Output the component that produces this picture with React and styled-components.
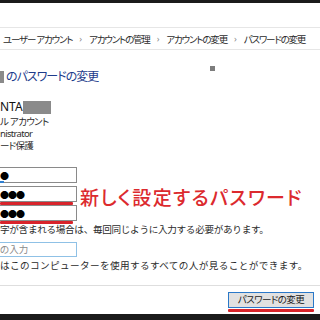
import React from "react";
import styled, { createGlobalStyle } from "styled-components";

const GlobalStyle = createGlobalStyle`
  html, body {
    margin: 0;
    padding: 0;
    background: #fff;
    overflow: hidden;
  }
  * {
    box-sizing: border-box;
  }
`;

const FONT = `"Noto Sans", "Noto Sans CJK JP", sans-serif`;

const crumbs = ["ユーザー アカウント", "アカウントの管理", "アカウントの変更", "パスワードの変更"];

export default function App() {
  return (
    <>
      <GlobalStyle />
      <SPage>
        <STopBand />
        <SBreadcrumb>
          {crumbs.map((c, i) => (
            <React.Fragment key={c}>
              {i > 0 && <SSep>›</SSep>}
              <SCrumb>{c}</SCrumb>
            </React.Fragment>
          ))}
        </SBreadcrumb>
        <SContent>
          <SCursorDot />
          <STitle>
            <SRedact $w={4} $h={12} />
            のパスワードの変更
          </STitle>
          <SAccount>
            <SName>
              NTA
              <SRedact $w={28} $h={13} />
            </SName>
            <SInfo>ル アカウント</SInfo>
            <SInfo>nistrator</SInfo>
            <SInfo>ード保護</SInfo>
          </SAccount>

          <SForm>
            <SInput $focus>
              <SDots>●</SDots>
            </SInput>
            <SMarked>
              <SInput>
                <SDots>●●●</SDots>
              </SInput>
              <SRedLine $w={73} />
            </SMarked>
            <SMarked>
              <SInput>
                <SDots>●●●</SDots>
              </SInput>
              <SRedLine $w={73} />
            </SMarked>
            <SNote>新しく設定するパスワード</SNote>
          </SForm>

          <SHelp $spacing={-0.3}>字が含まれる場合は、毎回同じように入力する必要があります。</SHelp>
          <SHintInput>の入力</SHintInput>
          <SHelp $spacing={0.4}>はこのコンピューターを使用するすべての人が見ることができます。</SHelp>
        </SContent>
        <SFooter>
          <SButtonWrap>
            <SButton>パスワードの変更</SButton>
            <SRedLine $w={86} />
          </SButtonWrap>
        </SFooter>
        <SBottomBand />
      </SPage>
    </>
  );
}

const SPage = styled.div`
  width: 320px;
  height: 320px;
  display: flex;
  flex-direction: column;
  font-family: ${FONT};
  font-feature-settings: "palt";
  color: #1a1a1a;
  overflow: hidden;
`;

const STopBand = styled.div`
  height: 3px;
  background: #1b1b1b;
  flex: none;
`;

const SBreadcrumb = styled.div`
  margin-top: 24px;
  height: 23px;
  border-top: 1px solid #e6e6e6;
  border-bottom: 1px solid #e6e6e6;
  display: flex;
  align-items: center;
  gap: 7px;
  padding-left: 3px;
  font-size: 9.5px;
  color: #2b2b2b;
  flex: none;
`;

const SCrumb = styled.span`
  white-space: pre;
  letter-spacing: -1.2px;
`;

const SSep = styled.span`
  color: #8a8a8a;
  font-size: 9px;
`;

const SContent = styled.div`
  position: relative;
  flex: 1;
  padding-top: 19px;
`;

const SCursorDot = styled.div`
  position: absolute;
  left: 210px;
  top: 16px;
  width: 5px;
  height: 5px;
  background: #7d7d7d;
`;

const STitle = styled.div`
  display: flex;
  align-items: center;
  gap: 2px;
  font-size: 12px;
  line-height: 16px;
  color: #1e3c8c;
  letter-spacing: -1px;
`;

const SRedact = styled.span`
  display: inline-block;
  width: ${(p) => p.$w}px;
  height: ${(p) => p.$h}px;
  background: #8a8a8a;
`;

const SAccount = styled.div`
  margin-top: 15px;
  display: flex;
  flex-direction: column;
`;

const SName = styled.div`
  display: flex;
  align-items: center;
  font-size: 12px;
  line-height: 14px;
  margin-bottom: 2px;
  color: #111;
`;

const SInfo = styled.div`
  font-size: 9.5px;
  line-height: 12px;
  color: #2b2b2b;
  white-space: nowrap;
  letter-spacing: -0.7px;
`;

const SForm = styled.div`
  margin-top: 15px;
  display: grid;
  grid-template-columns: 77px auto;
  grid-template-rows: 19px 19px 19px;
  column-gap: 3px;
`;

const SInput = styled.div`
  width: 77px;
  height: 16px;
  border: 1px solid #8a8a8a;
  border-left: none;
  background: #fff;
  display: flex;
  align-items: center;
  position: relative;
  grid-column: 1;
  ${(p) =>
    p.$focus &&
    `
    &::after {
      content: "";
      position: absolute;
      left: 0;
      bottom: -1px;
      width: 4px;
      height: 2px;
      background: #2f7fd0;
    }
  `}
`;

const SMarked = styled.div`
  grid-column: 1;
  display: flex;
  flex-direction: column;
`;

const SDots = styled.span`
  font-size: 9px;
  line-height: 1;
  letter-spacing: -1px;
  color: #000;
`;

const SRedLine = styled.div`
  width: ${(p) => p.$w}px;
  height: 3px;
  background: #d8242b;
  border-radius: 1px;
`;

const SNote = styled.div`
  grid-column: 2;
  grid-row: 2 / span 2;
  align-self: start;
  margin-top: 2px;
  font-size: 19px;
  line-height: 20px;
  font-weight: 500;
  color: #dc2a2e;
  white-space: nowrap;
  letter-spacing: 1.4px;
`;

const SHelp = styled.div`
  font-size: 9.6px;
  line-height: 12px;
  color: #2b2b2b;
  white-space: nowrap;
  font-feature-settings: normal;
  letter-spacing: ${(p) => p.$spacing}px;
`;

const SHintInput = styled.div`
  margin-top: 6px;
  margin-bottom: 3px;
  width: 77px;
  height: 15px;
  border: 1px solid #8fc1e6;
  border-left: none;
  font-size: 9.5px;
  line-height: 13px;
  color: #8a8a8a;
`;

const SFooter = styled.div`
  flex: none;
  height: 29px;
  border-top: 1px solid #dedede;
  display: flex;
  justify-content: flex-end;
  padding-top: 6px;
  padding-right: 6px;
`;

const SButtonWrap = styled.div`
  display: flex;
  flex-direction: column;
  gap: 1px;
`;

const SButton = styled.div`
  width: 86px;
  height: 16px;
  border: 1px solid #2a78c8;
  background: #e1e1e1;
  font-size: 9.5px;
  line-height: 14px;
  text-align: center;
  color: #1a1a1a;
  letter-spacing: -0.6px;
`;

const SBottomBand = styled.div`
  flex: none;
  height: 6px;
  background: #1b1b1b;
`;
